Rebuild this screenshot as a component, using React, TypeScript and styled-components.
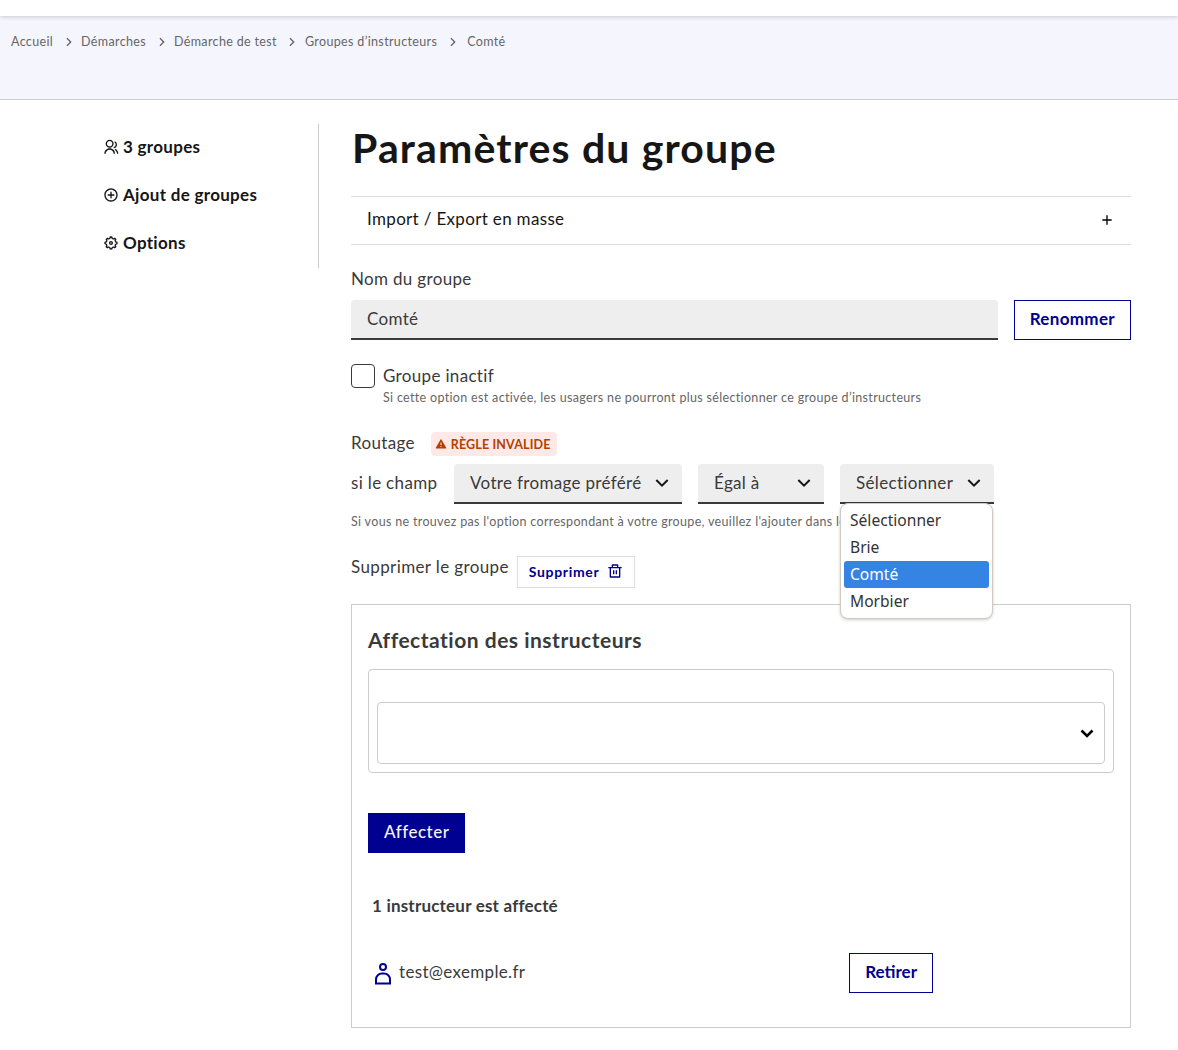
import React from "react";
import styled, { createGlobalStyle } from "styled-components";
import { RiGroupLine, RiAddCircleLine, RiSettings5Line, RiDeleteBinLine, RiAlertFill, RiArrowRightSLine, RiArrowDownSLine, RiAddLine } from "react-icons/ri";

const Global = createGlobalStyle`
  html, body { margin: 0; padding: 0; background: #fff; }
  body { font-family: "Lato", "Noto Sans", sans-serif; color: #3a3a3a; font-size: 17px; letter-spacing: .33px; }
  button { letter-spacing: inherit; }
  * { box-sizing: border-box; }
`;
const Page = styled.div`width: 1178px; height: 1050px; overflow: hidden;`;
const TopBar = styled.div`height: 16px; background: #fff; box-shadow: 0 1px 4px rgba(0,0,18,.18); position: relative;`;
const Band = styled.nav`height: 84px; background: #f5f5fe; border-bottom: 1px solid #ccc; padding: 17px 11px 0; display: flex; align-items: flex-start; font-size: 12.5px; line-height: 18px; color: #666; letter-spacing: .35px;`;
const Crumb = styled.span`white-space: nowrap; &:last-child { margin-left: 2px; }`;
const CrumbSep = styled.span`display: flex; align-items: center; justify-content: center; width: 28px; height: 18px; padding-left: 3px; color: #666; font-size: 16px;`;
const Main = styled.div`display: flex; padding-top: 24px;`;
const Side = styled.aside`width: 319px; height: 144px; border-right: 1px solid #ccc; padding-left: 103px; display: flex; flex-direction: column;`;
const SideItem = styled.div`height: 48px; display: flex; align-items: center; gap: 4px; font-weight: 700; font-size: 17px; letter-spacing: .3px; color: #161616; padding-bottom: 3px;`;
const Content = styled.main`margin-left: 32px; width: 780px;`;
const Title = styled.h1`margin: 0; font-size: 41px; line-height: 48px; font-weight: 700; color: #161616; padding-left: 1px; height: 72px; letter-spacing: 1.15px;`;
const Accordion = styled.div`height: 49px; border-top: 1px solid #ddd; border-bottom: 1px solid #ddd; display: flex; align-items: center; justify-content: space-between; padding: 0 16px 4px; color: #161616;`;
const AccordionPlus = styled(RiAddLine)`color: #000; margin-top: 2px;`;
const FieldLabel = styled.label`display: block; margin-top: 23px; height: 24px; line-height: 22px; color: #3a3a3a;`;
const NameRow = styled.div`display: flex; gap: 16px; margin-top: 8px;`;
const NameInput = styled.div`flex: 1; height: 40px; background: #eee; border-bottom: 2px solid #3a3a3a; border-radius: 4px 4px 0 0; padding: 0 16px; line-height: 37px; color: #3a3a3a;`;
const OutlineBtn = styled.button`height: 40px; padding: 0 15px 4px; background: #fff; border: 1px solid #000091; color: #000091; font: 700 17px "Lato", sans-serif;`;
const RemoveBtn = styled(OutlineBtn)`letter-spacing: 0;`;
const CheckRow = styled.div`display: flex; gap: 8px; margin-top: 24px;`;
const Check = styled.div`width: 24px; height: 24px; border: 1px solid #3a3a3a; border-radius: 4px; background: #fff;`;
const CheckText = styled.div`display: flex; flex-direction: column;`;
const CheckLabel = styled.div`line-height: 24px; color: #3a3a3a;`;
const Hint = styled.div`font-size: 12.5px; line-height: 20px; color: #666; white-space: nowrap;`;
const RouteRow = styled.div`display: flex; align-items: center; margin-top: 24px; height: 24px; gap: 16px;`;
const RouteLabel = styled.span`margin-top: -4px;`;
const Badge = styled.span`display: inline-flex; align-items: center; gap: 4px; height: 24px; padding: 0 6px 0 4px; background: #ffe9e6; color: #b34000; border-radius: 4px; font-size: 12.5px; font-weight: 700; letter-spacing: .15px;`;
const SelectRow = styled.div`display: flex; align-items: center; margin-top: 8px; gap: 16px;`;
const RowLabel = styled.span`margin-top: -4px; width: 87px; white-space: nowrap;`;
const SelectBox = styled.div<{ $w: number }>`position: relative; width: ${p => p.$w}px; height: 40px; background: #eee; border-bottom: 2px solid #3a3a3a; border-radius: 4px 4px 0 0; display: flex; align-items: center; justify-content: space-between; padding: 0 8px 2px 16px; color: #3a3a3a; white-space: nowrap;`;
const SelectArrow = styled(RiArrowDownSLine)`color: #161616; font-size: 24px; flex: none; margin-top: 2px;`;
const Menu = styled.ul`position: absolute; z-index: 3; left: 0; top: 39px; width: 153px; margin: 0; padding: 3px; list-style: none; background: #fff; border: 1px solid #cfcac5; border-radius: 8px; box-shadow: 0 1px 3px rgba(0,0,0,.2); font-family: "Noto Sans", sans-serif; font-size: 15.6px; letter-spacing: 0;`;
const MenuItem = styled.li<{ $on?: boolean }>`height: 27px; line-height: 27px; padding-left: 6px; border-radius: 3px; color: ${p => p.$on ? "#fff" : "#333"}; background: ${p => p.$on ? "#3584e4" : "transparent"};`;
const Hint2 = styled(Hint)`margin-top: 8px;`;
const DeleteRow = styled.div`display: flex; align-items: flex-start; margin-top: 24px; gap: 8px;`;
const DeleteLabel = styled.span`line-height: 22px; letter-spacing: .38px;`;
const DeleteBtn = styled.button`height: 32px; padding: 0 11px 2px; display: flex; align-items: center; gap: 8px; background: #fff; border: 1px solid #ddd; color: #000091; font: 700 14px "Lato", sans-serif; letter-spacing: .65px;`;
const Card = styled.section`margin-top: 16px; height: 424px; border: 1px solid #ccc; padding: 0 16px;`;
const CardTitle = styled.h3`margin: 24px 0 0; font-size: 21px; line-height: 22px; height: 24px; font-weight: 700; color: #3a3a3a; letter-spacing: .5px;`;
const ComboWrap = styled.div`margin-top: 16px; height: 104px; border: 1px solid #ccc; border-radius: 4px; padding: 32px 8px 0;`;
const Combo = styled.div`height: 62px; border: 1px solid #ccc; border-radius: 4px; display: flex; align-items: center; justify-content: flex-end; padding-right: 10px; color: #000;`;
const Primary = styled.button`display: block; margin-top: 40px; height: 40px; padding: 0 16px 4px; background: #000091; color: #f5f5fe; border: 0; font: 500 17px "Lato", sans-serif; letter-spacing: .5px;`;
const Count = styled.div`margin-top: 41px; padding-left: 4px; font-weight: 700; font-size: 17px; line-height: 24px; color: #3a3a3a; letter-spacing: .2px;`;
const UserRow = styled.div`display: flex; align-items: center; margin-top: 35px; height: 40px; padding-left: 3px; width: 565px;`;
const Email = styled.span`margin-left: 4px; flex: 1; margin-top: -4px;`;
const Crumbs = ["Accueil", "Démarches", "Démarche de test", "Groupes d’instructeurs", "Comté"];

export default function App() {
  return (
    <Page>
      <Global />
      <TopBar />
      <Band>
        {Crumbs.map((c, i) => (
          <React.Fragment key={c}>
            <Crumb>{c}</Crumb>
            {i < Crumbs.length - 1 && <CrumbSep><RiArrowRightSLine /></CrumbSep>}
          </React.Fragment>
        ))}
      </Band>
      <Main>
        <Side>
          <SideItem><RiGroupLine size={16} />3 groupes</SideItem>
          <SideItem><RiAddCircleLine size={16} />Ajout de groupes</SideItem>
          <SideItem><RiSettings5Line size={16} />Options</SideItem>
        </Side>
        <Content>
          <Title>Paramètres du groupe</Title>
          <Accordion>Import / Export en masse<AccordionPlus size={16} /></Accordion>
          <FieldLabel>Nom du groupe</FieldLabel>
          <NameRow>
            <NameInput>Comté</NameInput>
            <OutlineBtn>Renommer</OutlineBtn>
          </NameRow>
          <CheckRow>
            <Check />
            <CheckText>
              <CheckLabel>Groupe inactif</CheckLabel>
              <Hint>Si cette option est activée, les usagers ne pourront plus sélectionner ce groupe d’instructeurs</Hint>
            </CheckText>
          </CheckRow>
          <RouteRow><RouteLabel>Routage</RouteLabel><Badge><RiAlertFill size={12} />RÈGLE INVALIDE</Badge></RouteRow>
          <SelectRow>
            <RowLabel>si le champ</RowLabel>
            <SelectBox $w={228}>Votre fromage préféré<SelectArrow /></SelectBox>
            <SelectBox $w={126}>Égal à<SelectArrow /></SelectBox>
            <SelectBox $w={154}>
              Sélectionner<SelectArrow />
              <Menu>
                <MenuItem>Sélectionner</MenuItem>
                <MenuItem>Brie</MenuItem>
                <MenuItem $on>Comté</MenuItem>
                <MenuItem>Morbier</MenuItem>
              </Menu>
            </SelectBox>
          </SelectRow>
          <Hint2>Si vous ne trouvez pas l'option correspondant à votre groupe, veuillez l'ajouter dans les options</Hint2>
          <DeleteRow>
            <DeleteLabel>Supprimer le groupe</DeleteLabel>
            <DeleteBtn>Supprimer<RiDeleteBinLine size={16} /></DeleteBtn>
          </DeleteRow>
          <Card>
            <CardTitle>Affectation des instructeurs</CardTitle>
            <ComboWrap>
              <Combo>
                <svg width="14" height="9" viewBox="0 0 14 9" fill="none" stroke="#000" strokeWidth="2.6"><path d="M1.5 1.5 7 7l5.5-5.5" /></svg>
              </Combo>
            </ComboWrap>
            <Primary>Affecter</Primary>
            <Count>1 instructeur est affecté</Count>
            <UserRow>
              <svg width="24" height="24" viewBox="0 0 24 24" fill="none" stroke="#000091" strokeWidth="2"><circle cx="12" cy="6" r="3" /><path d="M5 22.5v-4a6 6 0 0 1 6-6h2a6 6 0 0 1 6 6v4z" /></svg>
              <Email>test@exemple.fr</Email>
              <RemoveBtn>Retirer</RemoveBtn>
            </UserRow>
          </Card>
        </Content>
      </Main>
    </Page>
  );
}
